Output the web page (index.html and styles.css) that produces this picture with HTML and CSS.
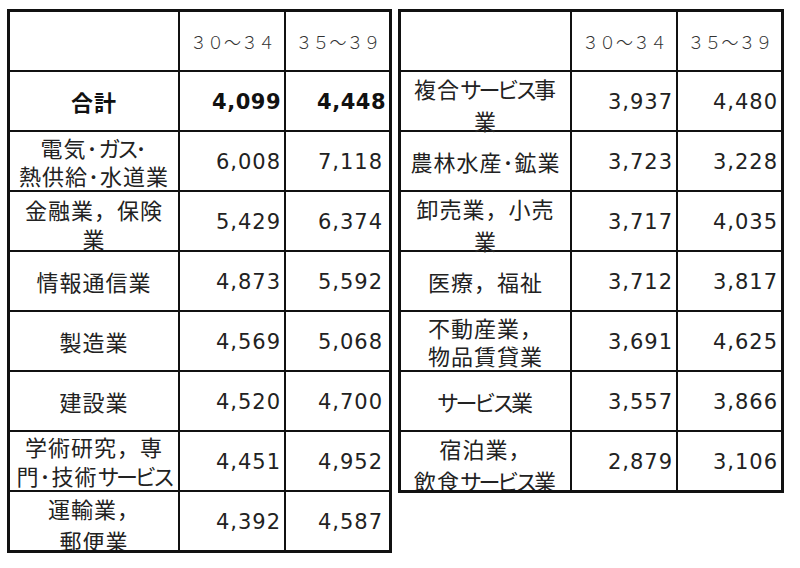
FILE: index.html
```html
<!DOCTYPE html>
<html lang="ja">
<head>
<meta charset="utf-8">
<title>業種別 年収</title>
<link rel="stylesheet" href="styles.css">
</head>
<body>
<div class="page">
  <table class="tbl tbl-left">
    <colgroup><col class="col-label-l"><col class="col-num"><col></colgroup>
    <tr>
      <th class="lbl"><div class="cell"></div></th>
      <th class="hd"><div class="cell">３０～３４</div></th>
      <th class="hd"><div class="cell">３５～３９</div></th>
    </tr>
    <tr class="total">
      <td class="lbl"><div class="cell"><div class="t">合計</div></div></td>
      <td class="num"><div class="cell">4,099</div></td>
      <td class="num n3"><div class="cell">4,448</div></td>
    </tr>
    <tr>
      <td class="lbl"><div class="cell"><div class="t tight">電気･<span class="k">ガス</span>･<br>熱供給･水道業</div></div></td>
      <td class="num"><div class="cell">6,008</div></td>
      <td class="num n3"><div class="cell">7,118</div></td>
    </tr>
    <tr>
      <td class="lbl"><div class="cell"><div class="t low">金融業，保険<br>業</div></div></td>
      <td class="num"><div class="cell">5,429</div></td>
      <td class="num n3"><div class="cell">6,374</div></td>
    </tr>
    <tr>
      <td class="lbl"><div class="cell"><div class="t">情報通信業</div></div></td>
      <td class="num"><div class="cell">4,873</div></td>
      <td class="num n3"><div class="cell">5,592</div></td>
    </tr>
    <tr>
      <td class="lbl"><div class="cell"><div class="t">製造業</div></div></td>
      <td class="num"><div class="cell">4,569</div></td>
      <td class="num n3"><div class="cell">5,068</div></td>
    </tr>
    <tr>
      <td class="lbl"><div class="cell"><div class="t">建設業</div></div></td>
      <td class="num"><div class="cell">4,520</div></td>
      <td class="num n3"><div class="cell">4,700</div></td>
    </tr>
    <tr>
      <td class="lbl"><div class="cell"><div class="t">学術研究，専<br>門･技術<span class="k">サービス</span></div></div></td>
      <td class="num"><div class="cell">4,451</div></td>
      <td class="num n3"><div class="cell">4,952</div></td>
    </tr>
    <tr>
      <td class="lbl"><div class="cell clip"><div class="t loose">運輸業，<br>郵便業</div></div></td>
      <td class="num"><div class="cell">4,392</div></td>
      <td class="num n3"><div class="cell">4,587</div></td>
    </tr>
  </table>

  <table class="tbl tbl-right">
    <colgroup><col class="col-label-r"><col class="col-num"><col></colgroup>
    <tr>
      <th class="lbl"><div class="cell"></div></th>
      <th class="hd"><div class="cell">３０～３４</div></th>
      <th class="hd"><div class="cell">３５～３９</div></th>
    </tr>
    <tr>
      <td class="lbl"><div class="cell"><div class="t loose low">複合<span class="k">サービス</span>事<br>業</div></div></td>
      <td class="num"><div class="cell">3,937</div></td>
      <td class="num"><div class="cell">4,480</div></td>
    </tr>
    <tr>
      <td class="lbl"><div class="cell"><div class="t">農林水産･鉱業</div></div></td>
      <td class="num"><div class="cell">3,723</div></td>
      <td class="num"><div class="cell">3,228</div></td>
    </tr>
    <tr>
      <td class="lbl"><div class="cell"><div class="t loose low">卸売業，小売<br>業</div></div></td>
      <td class="num"><div class="cell">3,717</div></td>
      <td class="num"><div class="cell">4,035</div></td>
    </tr>
    <tr>
      <td class="lbl"><div class="cell"><div class="t">医療，福祉</div></div></td>
      <td class="num"><div class="cell">3,712</div></td>
      <td class="num"><div class="cell">3,817</div></td>
    </tr>
    <tr>
      <td class="lbl"><div class="cell"><div class="t tight">不動産業，<br>物品賃貸業</div></div></td>
      <td class="num"><div class="cell">3,691</div></td>
      <td class="num"><div class="cell">4,625</div></td>
    </tr>
    <tr>
      <td class="lbl"><div class="cell"><div class="t"><span class="k">サービス</span>業</div></div></td>
      <td class="num"><div class="cell">3,557</div></td>
      <td class="num"><div class="cell">3,866</div></td>
    </tr>
    <tr>
      <td class="lbl"><div class="cell clip"><div class="t loose">宿泊業，<br>飲食<span class="k">サービス</span>業</div></div></td>
      <td class="num"><div class="cell">2,879</div></td>
      <td class="num"><div class="cell">3,106</div></td>
    </tr>
  </table>
</div>
</body>
</html>
```

FILE: styles.css
```css
* {
  box-sizing: border-box;
}

html, body {
  margin: 0;
  background: #ffffff;
}

.page {
  display: flex;
  align-items: flex-start;
  gap: 6px;
  padding: 9px 0 0 7px;
}

.tbl {
  border-collapse: separate;
  border-spacing: 0;
  table-layout: fixed;
  border: 3px solid #111111;
}

.tbl-left {
  width: 385px;
}

.tbl-right {
  width: 386px;
}

.col-label-l {
  width: 170px;
}

.col-label-r {
  width: 171px;
}

.col-num {
  width: 106px;
}

.tbl th,
.tbl td {
  padding: 0;
  font-weight: normal;
  border-right: 2px solid #111111;
  border-bottom: 2px solid #111111;
}

.tbl tr > :last-child {
  border-right: none;
}

.tbl tr:last-child > * {
  border-bottom: none;
}

.cell {
  height: 58px;
  display: flex;
  align-items: center;
  white-space: nowrap;
  color: #222222;
}

.lbl .cell {
  justify-content: center;
  text-align: center;
  font-family: "Noto Sans CJK JP", sans-serif;
  font-size: 22px;
  letter-spacing: 1px;
  line-height: 29px;
}

.t.tight {
  line-height: 28px;
}

.t.loose {
  line-height: 32px;
}

.t.low {
  padding-top: 5px;
}

.lbl .cell.clip {
  align-items: flex-start;
  overflow: hidden;
}

.k {
  letter-spacing: -3.5px;
}

.hd .cell {
  justify-content: center;
  font-family: "Noto Sans CJK JP", sans-serif;
  font-size: 17px;
  font-weight: 300;
  color: #333333;
  padding-left: 1px;
}

.num .cell {
  justify-content: flex-end;
  font-family: "DejaVu Sans", sans-serif;
  font-size: 21px;
  letter-spacing: 1px;
  padding-right: 3px;
  padding-top: 2px;
}

.num.n3 .cell {
  padding-right: 6px;
}

.total .cell {
  font-weight: bold;
  color: #111111;
}

.total .num .cell {
  letter-spacing: 0.5px;
}

.total .num.n3 .cell {
  padding-right: 3px;
}
```
